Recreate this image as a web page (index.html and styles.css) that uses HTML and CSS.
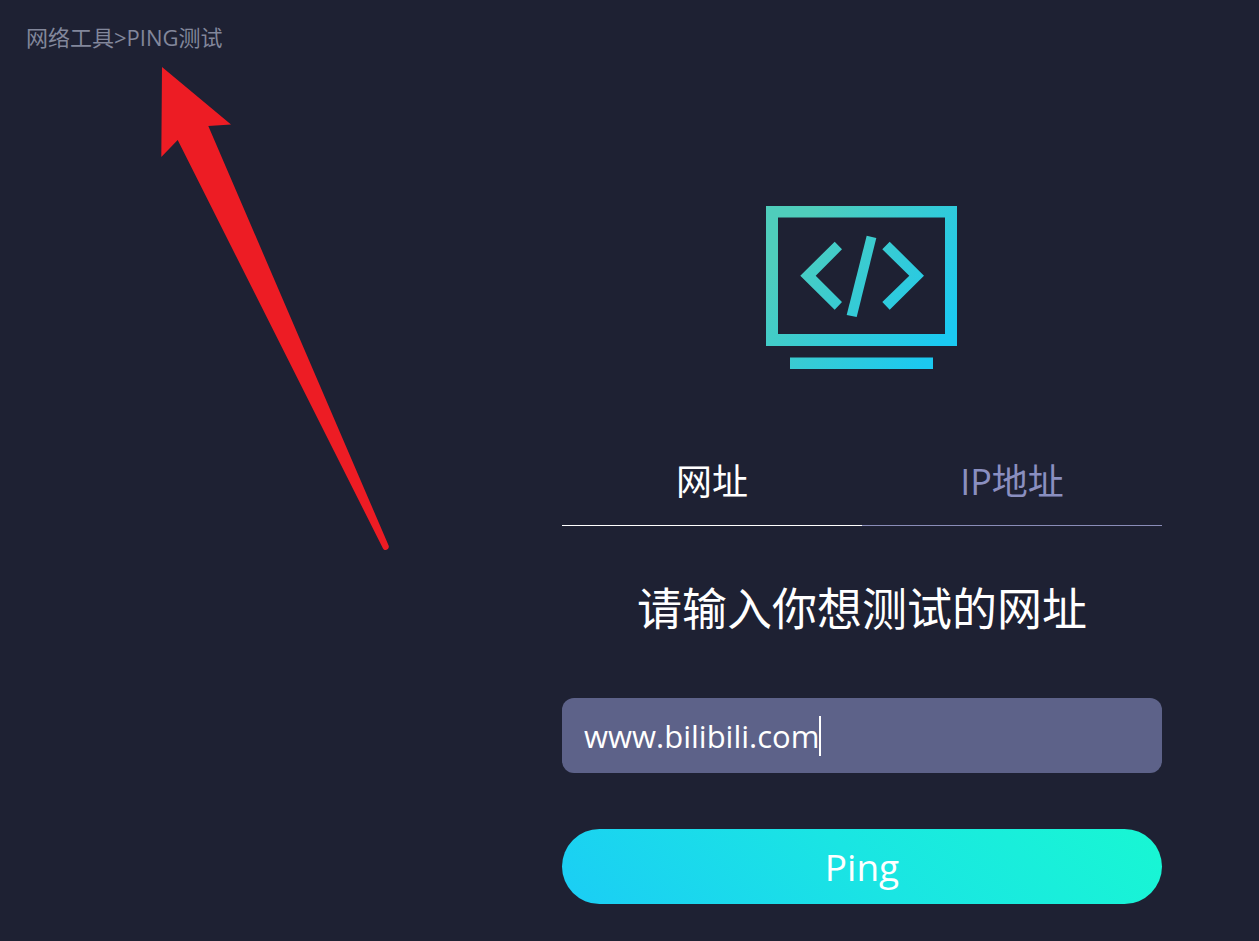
FILE: index.html
```html
<!DOCTYPE html>
<html lang="zh-CN">
<head>
    <meta charset="UTF-8">
    <meta name="viewport" content="width=device-width, initial-scale=1.0">
    <title>PING测试</title>
    <link rel="stylesheet" href="styles.css">
</head>
<body>
    <nav class="breadcrumb">网络工具&gt;PING测试</nav>

    <main class="content">
        <svg class="logo" viewBox="0 0 192 163" aria-hidden="true">
            <defs>
                <linearGradient id="logoFill" gradientUnits="userSpaceOnUse" x1="30" y1="26" x2="176" y2="136">
                    <stop offset="0" stop-color="#4fcdbb"/>
                    <stop offset="1" stop-color="#1bc9f1"/>
                </linearGradient>
            </defs>
            <g fill="url(#logoFill)">
                <path fill-rule="evenodd" d="M0 0H191V140H0ZM12 11.6V128H179V11.6Z"/>
                <path d="M68.7 35.7L76 43.3L49.7 69.7L76 96L68.7 103.7L34.3 69.7Z"/>
                <path d="M123.7 35.7L158 69.7L123.7 103.7L116.3 96L143.3 69.7L116.3 43.3Z"/>
                <path d="M100.7 29.7L110.3 32L90.7 111L80.7 109Z"/>
                <path d="M24 151.4H167V163H24Z"/>
            </g>
        </svg>

        <form class="ping-form" onsubmit="return false">
            <div class="tabs" role="tablist">
                <button type="button" class="tab active" role="tab" aria-selected="true">网址</button>
                <button type="button" class="tab" role="tab" aria-selected="false">IP地址</button>
            </div>
            <label class="title" for="host">请输入你想测试的网址</label>
            <div class="field">
                <input class="host-input" id="host" type="text" value="www.bilibili.com">
                <span class="caret"></span>
            </div>
            <button type="submit" class="ping-button">Ping</button>
        </form>
    </main>

    <!-- pointer to the breadcrumb -->
    <svg class="arrow" viewBox="0 0 230 484" aria-hidden="true">
        <path fill="#ed1c24" d="M2 0L71 57.5L48.3 59L228.6 478.5C230 482 225 485 223 481.5L17.7 73L1.3 90Z"/>
    </svg>
</body>
</html>
```
FILE: styles.css
```css
* {
    box-sizing: border-box;
}
body {
    margin: 0;
    position: relative;
    background-color: #1e2133;
    color: #fff;
    font-family: "Open Sans", "Noto Sans CJK SC", sans-serif;
}
.breadcrumb {
    padding: 23px 26px 0;
    font-size: 22px;
    line-height: 28px;
    color: #82879b;
}
.content {
    display: flex;
    flex-direction: column;
    align-items: center;
    padding: 155px 0 37px 465px;
}
.logo {
    width: 192px;
    height: 163px;
}
.ping-form {
    width: 100%;
    max-width: 600px;
    margin-top: 69px;
}
.tabs {
    display: flex;
}
.tab {
    flex: 1;
    padding: 16px 0;
    border: none;
    border-bottom: 1px solid #8a8db8;
    background: none;
    color: #8a8fc0;
    font-family: inherit;
    font-size: 36px;
    line-height: 55px;
    cursor: pointer;
}
.tab.active {
    color: #fff;
    border-bottom-color: #fff;
}
.title {
    display: block;
    margin-top: 53px;
    font-size: 45px;
    line-height: 60px;
    text-align: center;
}
.field {
    position: relative;
    margin-top: 59px;
}
.host-input {
    display: block;
    width: 100%;
    height: 75px;
    padding: 0 22px;
    border: none;
    border-radius: 12px;
    outline: none;
    background-color: #5d6289;
    color: #fff;
    caret-color: transparent;
    font-family: inherit;
    font-size: 31px;
}
.caret {
    position: absolute;
    top: 18px;
    left: 257px;
    width: 2px;
    height: 40px;
    background-color: #fff;
}
.ping-button {
    display: block;
    width: 100%;
    height: 75px;
    margin-top: 56px;
    border: none;
    border-radius: 38px;
    background: linear-gradient(45deg, #1bcdf5, #1ae5e3 50%, #18f7d3);
    color: #fff;
    font-family: inherit;
    font-size: 37px;
    cursor: pointer;
}
.arrow {
    position: absolute;
    top: 67px;
    left: 160px;
    width: 230px;
    height: 484px;
    pointer-events: none;
}
```
